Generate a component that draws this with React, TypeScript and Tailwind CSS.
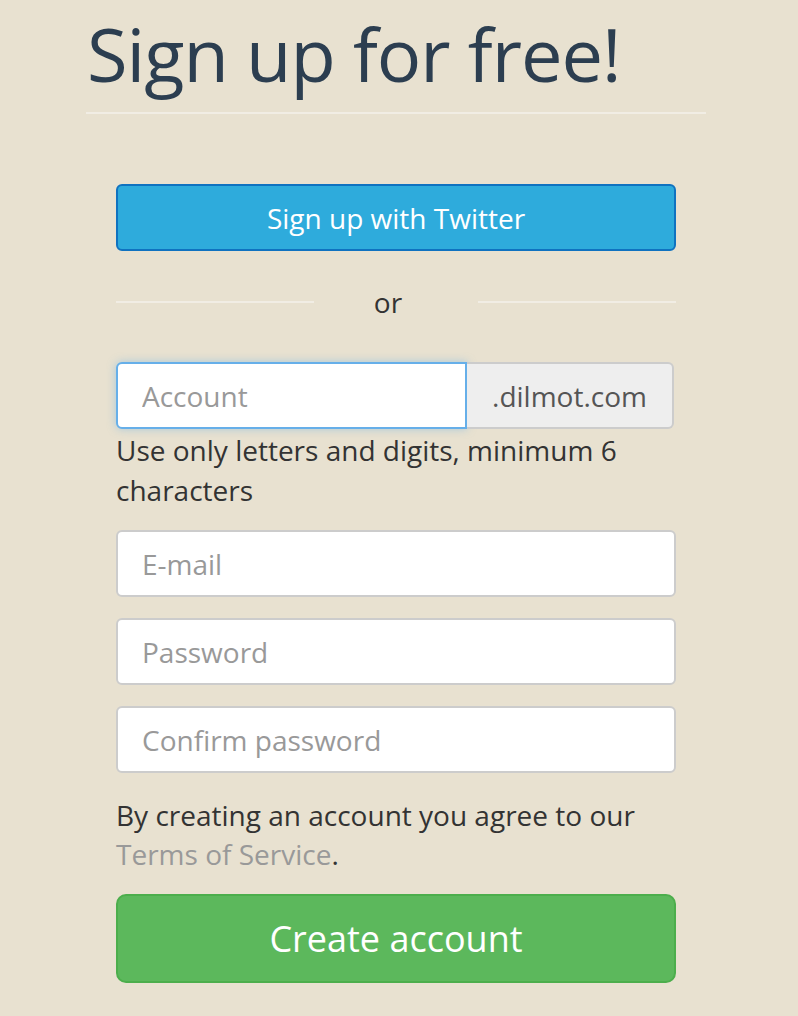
import React from "react";

const font = { fontFamily: '"Open Sans", "Noto Sans", sans-serif' };

export default function App() {
  return (
    <div className="min-h-[1016px] w-full bg-[#e8e1d0] text-[#333]" style={font}>
      <div className="mx-auto w-[620px] -translate-x-[3px] pt-[10px]">
        <h1 className="pl-[1px] text-[74px] leading-[88px] font-normal tracking-[-1px] text-[#2c3e50]">
          Sign up for free!
        </h1>
        <div className="mt-[14px] h-[2px] bg-[#f1ede4]" />

        <form className="mx-auto mt-[70px] w-[560px]" onSubmit={(e) => e.preventDefault()}>
          <button
            type="button"
            className="h-[67px] w-full rounded-[6px] border-2 border-[#0f72c0] bg-[#2eabdc] text-[28px] text-white"
          >
            Sign up with Twitter
          </button>

          <div className="mt-[34px] flex items-center">
            <div className="h-[2px] flex-1 bg-[#f1ede4]" />
            <span className="w-[164px] pr-[16px] text-center text-[28px] leading-[34px] text-[#333]">or</span>
            <div className="h-[2px] flex-1 bg-[#f1ede4]" />
          </div>

          <div className="mt-[43px] flex h-[67px] w-[558px]">
            <input
              placeholder="Account"
              className="h-full w-[351px] rounded-l-[6px] border-2 border-[#66afe9] bg-white px-[24px] text-[28px] text-[#555] shadow-[0_0_8px_rgba(102,175,233,0.5)] outline-none placeholder:text-[#999]"
            />
            <span className="flex h-full flex-1 items-center justify-center rounded-r-[6px] border-2 border-l-0 border-[#ccc] bg-[#eee] text-[28px] text-[#555]">
              .dilmot.com
            </span>
          </div>
          <p className="mt-[1px] text-[28px] leading-[40px] text-[#333]">
            Use only letters and digits, minimum 6 characters
          </p>

          <div className="mt-[20px] flex flex-col gap-[21px]">
            {["E-mail", "Password", "Confirm password"].map((p) => (
              <input
                key={p}
                type="text"
                placeholder={p}
                className="h-[67px] w-full rounded-[6px] border-2 border-[#ccc] bg-white px-[24px] text-[28px] text-[#555] outline-none placeholder:text-[#999]"
              />
            ))}
          </div>

          <p className="mt-[23px] text-[28px] leading-[39px] text-[#333]">
            By creating an account you agree to our{" "}
            <a href="#" className="text-[#999]">
              Terms of Service
            </a>
            .
          </p>

          <button
            type="submit"
            className="mt-[20px] h-[89px] w-full rounded-[10px] border-2 border-[#4cae4c] bg-[#5cb85c] text-[36px] text-white"
          >
            Create account
          </button>
        </form>
      </div>
    </div>
  );
}
